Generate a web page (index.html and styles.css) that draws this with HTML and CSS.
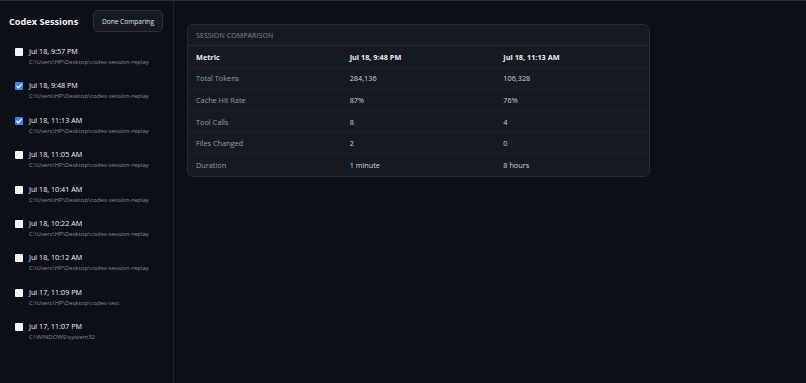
FILE: index.html
```html
<!DOCTYPE html>
<html>
<head>
<meta charset="utf-8">
<link rel="stylesheet" href="styles.css">
</head>
<body>
<div class="app">
  <aside class="sidebar">
    <div class="side-head">
      <h1 class="title">Codex Sessions</h1>
      <button class="btn">Done Comparing</button>
    </div>
    <ul class="sessions">
      <li class="session"><span class="cb"></span><div class="meta"><div class="date">Jul 18, 9:57 PM</div><div class="path">C:\Users\HP\Desktop\codex-session-replay</div></div></li>
      <li class="session"><span class="cb checked"><svg viewBox="0 0 10 10"><path d="M2.2 5.2 L4.2 7.2 L7.9 2.9" fill="none" stroke="#fff" stroke-width="1.5" stroke-linecap="round" stroke-linejoin="round"/></svg></span><div class="meta"><div class="date">Jul 18, 9:48 PM</div><div class="path">C:\Users\HP\Desktop\codex-session-replay</div></div></li>
      <li class="session"><span class="cb checked"><svg viewBox="0 0 10 10"><path d="M2.2 5.2 L4.2 7.2 L7.9 2.9" fill="none" stroke="#fff" stroke-width="1.5" stroke-linecap="round" stroke-linejoin="round"/></svg></span><div class="meta"><div class="date">Jul 18, 11:13 AM</div><div class="path">C:\Users\HP\Desktop\codex-session-replay</div></div></li>
      <li class="session"><span class="cb"></span><div class="meta"><div class="date">Jul 18, 11:05 AM</div><div class="path">C:\Users\HP\Desktop\codex-session-replay</div></div></li>
      <li class="session"><span class="cb"></span><div class="meta"><div class="date">Jul 18, 10:41 AM</div><div class="path">C:\Users\HP\Desktop\codex-session-replay</div></div></li>
      <li class="session"><span class="cb"></span><div class="meta"><div class="date">Jul 18, 10:22 AM</div><div class="path">C:\Users\HP\Desktop\codex-session-replay</div></div></li>
      <li class="session"><span class="cb"></span><div class="meta"><div class="date">Jul 18, 10:12 AM</div><div class="path">C:\Users\HP\Desktop\codex-session-replay</div></div></li>
      <li class="session"><span class="cb"></span><div class="meta"><div class="date">Jul 17, 11:09 PM</div><div class="path">C:\Users\HP\Desktop\codex-test</div></div></li>
      <li class="session"><span class="cb"></span><div class="meta"><div class="date">Jul 17, 11:07 PM</div><div class="path">C:\WINDOWS\system32</div></div></li>
    </ul>
  </aside>
  <main class="main">
    <section class="card">
      <div class="card-head">SESSION COMPARISON</div>
      <table class="cmp">
        <thead>
          <tr><th>Metric</th><th>Jul 18, 9:48 PM</th><th>Jul 18, 11:13 AM</th></tr>
        </thead>
        <tbody>
          <tr><td class="lbl">Total Tokens</td><td>284,136</td><td>106,328</td></tr>
          <tr><td class="lbl">Cache Hit Rate</td><td>87%</td><td>76%</td></tr>
          <tr><td class="lbl">Tool Calls</td><td>8</td><td>4</td></tr>
          <tr><td class="lbl">Files Changed</td><td>2</td><td>0</td></tr>
          <tr><td class="lbl">Duration</td><td>1 minute</td><td>8 hours</td></tr>
        </tbody>
      </table>
    </section>
  </main>
</div>
</body>
</html>
```
FILE: styles.css
```css
* { box-sizing: border-box; }
html, body { margin: 0; padding: 0; }
body {
  background: #0d1117;
  font-family: "Open Sans", "Noto Sans", sans-serif;
  color: #e6edf3;
  width: 806px;
  height: 383px;
  overflow: hidden;
}
.app {
  display: flex;
  height: 383px;
  border-top: 1px solid #2a2f37;
}
.sidebar {
  width: 174px;
  flex: none;
  background: #0d1016;
  border-right: 1px solid #21262d;
}
.side-head {
  display: flex;
  align-items: center;
  justify-content: space-between;
  padding: 9px 10px 8px 9px;
}
.title {
  margin: 0;
  font-size: 9.2px;
  font-weight: 700;
  color: #f0f3f6;
}
.btn {
  font-family: inherit;
  font-size: 6.6px;
  color: #dde3e9;
  background: #161b22;
  border: 1px solid #2b3038;
  border-radius: 5px;
  height: 22px;
  padding: 0 8px;
  white-space: nowrap;
}
.sessions {
  list-style: none;
  margin: 0;
  padding: 0;
}
.session {
  display: flex;
  align-items: flex-start;
  gap: 6px;
  padding: 6px 15px;
  height: 34.4px;
}
.cb {
  width: 8px;
  height: 8px;
  margin-top: 2px;
  background: #f4f4f4;
  border-radius: 1px;
  flex: none;
  display: flex;
}
.cb.checked { background: #3b82f6; }
.cb svg { width: 8px; height: 8px; }
.date {
  font-size: 7.2px;
  line-height: 11px;
  font-weight: 500;
  color: #eef1f4;
}
.path {
  font-size: 6px;
  line-height: 11px;
  color: #848d97;
}
.main {
  flex: 1;
  padding: 23px 13px;
  background: #0d1117;
}
.card {
  width: 463px;
  background: #161b22;
  border: 1px solid #262c34;
  border-radius: 6px;
  overflow: hidden;
}
.card-head {
  height: 21px;
  line-height: 21px;
  padding: 0 8px;
  font-size: 7px;
  color: #7d8590;
  letter-spacing: 0.1px;
  border-bottom: 1px solid #262c34;
}
.cmp {
  width: 100%;
  border-collapse: collapse;
  table-layout: fixed;
}
.cmp th, .cmp td {
  text-align: left;
  padding: 0 8px;
  height: 21.6px;
  font-size: 7.3px;
}
.cmp th {
  font-weight: 700;
  color: #e6edf3;
}
.cmp td { color: #c9d1d9; }
.cmp td.lbl { color: #939ba5; }
.cmp tr { border-bottom: 1px solid #1f242c; }
.cmp tbody tr:last-child { border-bottom: none; }
```
